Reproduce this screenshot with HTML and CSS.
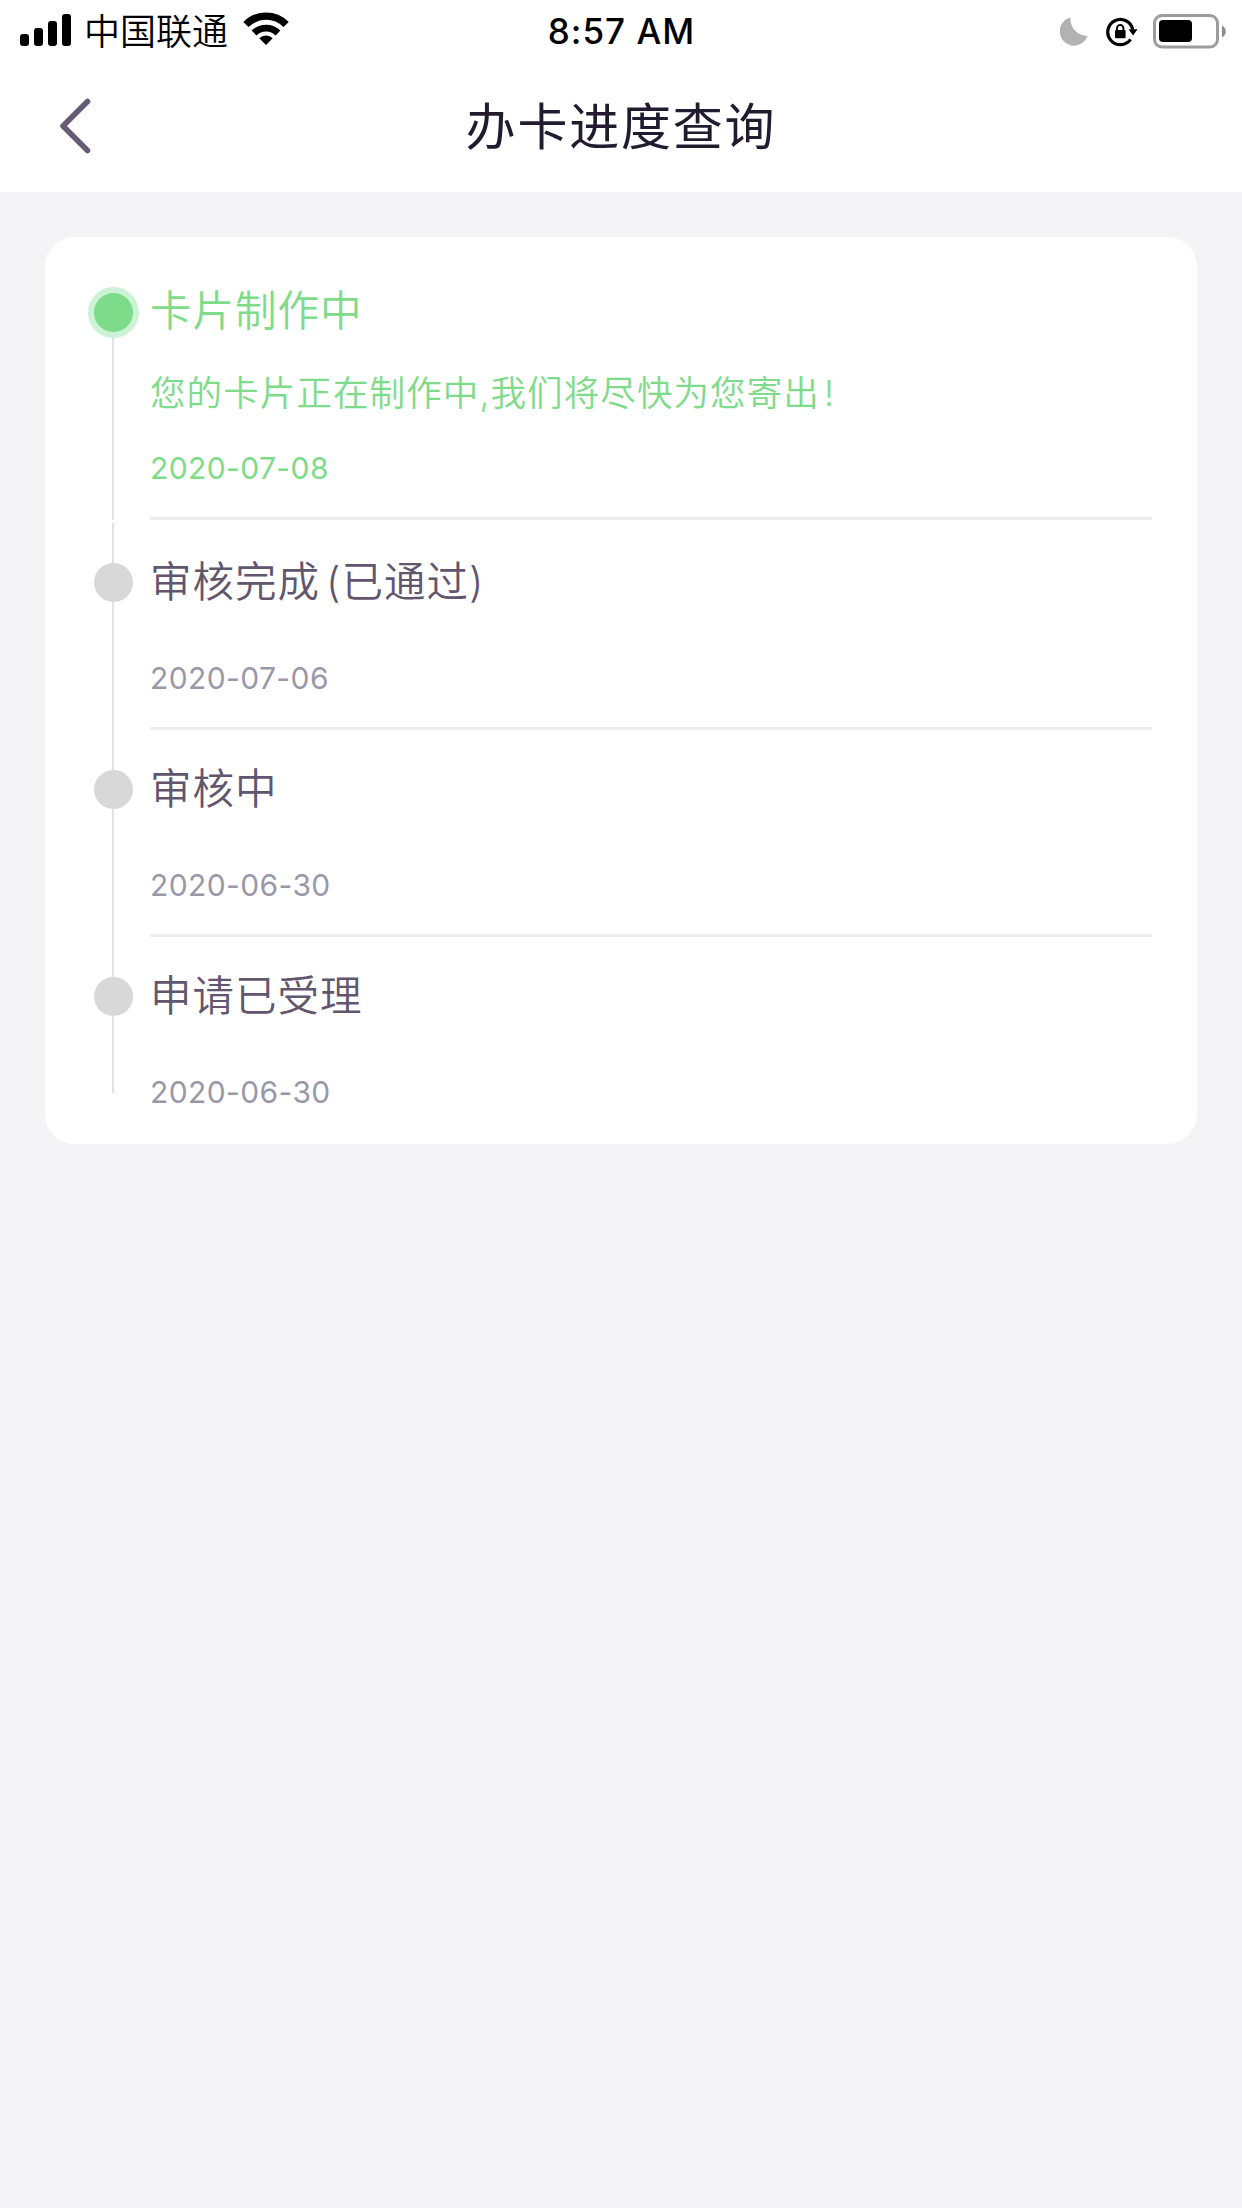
FILE: index.html
```html
<!DOCTYPE html>
<html lang="zh-CN">
<head>
    <meta charset="UTF-8">
    <meta name="viewport" content="width=device-width, initial-scale=1.0">
    <title>办卡进度查询</title>
    <link rel="stylesheet" href="styles.css">
</head>
<body>
    <div class="status-bar">
        <div class="status-left">
            <svg class="icon-signal" width="52" height="32" viewBox="0 0 52 32">
                <rect x="0" y="20" width="9" height="12" rx="3"/>
                <rect x="14" y="14" width="9" height="18" rx="3"/>
                <rect x="28" y="7" width="9" height="25" rx="3"/>
                <rect x="42" y="0" width="9" height="32" rx="3"/>
            </svg>
            <span class="carrier">中国联通</span>
            <svg class="icon-wifi" width="46" height="34" viewBox="0 0 46 34">
                <path d="M2.9 12.5A28.4 28.4 0 0 1 43.1 12.5" fill="none" stroke="#000" stroke-width="7.4"/>
                <path d="M11 21A17 17 0 0 1 35 21" fill="none" stroke="#000" stroke-width="6.8"/>
                <path d="M23 33L16.3 26.3A9.5 9.5 0 0 1 29.7 26.3Z"/>
            </svg>
        </div>
        <div class="clock">8:57 AM</div>
        <div class="status-right">
            <svg class="icon-moon" width="28" height="29" viewBox="0 0 28 29">
                <path d="M10.5 0.5A17 17 0 0 0 27.5 19A14.3 14.3 0 1 1 10.5 0.5Z" fill="#b2b2b2"/>
            </svg>
            <svg class="icon-lock" width="32" height="30" viewBox="0 0 32 30">
                <path d="M24.6 22.4A12.6 12.6 0 1 1 26.7 12.5" fill="none" stroke="#000" stroke-width="3.2"/>
                <path d="M22.6 12.2H31.6L27 18.4Z"/>
                <rect x="9" y="13" width="10.6" height="8.2" rx="1"/>
                <path d="M11 14V11.2A3.2 3.2 0 0 1 17.4 11.2V14" fill="none" stroke="#000" stroke-width="1.9"/>
            </svg>
            <svg class="icon-battery" width="74" height="35" viewBox="0 0 74 35">
                <rect x="1.5" y="1.5" width="63" height="31.5" rx="7.5" fill="none" stroke="#9c9c9c" stroke-width="3"/>
                <rect x="6" y="6" width="33" height="22" rx="4"/>
                <path d="M69 11.5C74 14 74 21 69 23.5Z" fill="#8c8c8c"/>
            </svg>
        </div>
    </div>

    <header class="nav">
        <svg class="back" width="32" height="56" viewBox="0 0 32 56">
            <path d="M27.5 3.5L3 28L27.5 52.5" fill="none" stroke="#665b74" stroke-width="5.6" stroke-linecap="round" stroke-linejoin="round"/>
        </svg>
        <h1>办卡进度查询</h1>
    </header>

    <ul class="card">
        <li class="step active">
            <div class="axis">
                <span class="line top"></span>
                <span class="dot"></span>
                <span class="line"></span>
            </div>
            <div class="content">
                <h2>卡片制作中</h2>
                <p class="desc">您的卡片正在制作中,我们将尽快为您寄出<span class="mark">!</span></p>
                <time>2020-07-08</time>
            </div>
        </li>
        <li class="step second">
            <div class="axis">
                <span class="line top"></span>
                <span class="dot"></span>
                <span class="line"></span>
            </div>
            <div class="content">
                <h2>审核完成<span class="paren">(</span>已通过)</h2>
                <time>2020-07-06</time>
            </div>
        </li>
        <li class="step">
            <div class="axis">
                <span class="line top"></span>
                <span class="dot"></span>
                <span class="line"></span>
            </div>
            <div class="content">
                <h2>审核中</h2>
                <time>2020-06-30</time>
            </div>
        </li>
        <li class="step last">
            <div class="axis">
                <span class="line top"></span>
                <span class="dot"></span>
                <span class="line"></span>
            </div>
            <div class="content">
                <h2>申请已受理</h2>
                <time>2020-06-30</time>
            </div>
        </li>
    </ul>
</body>
</html>
```

FILE: styles.css
```css
:root {
    --green: #7ddb8a;
    --purple: #62566f;
    --title: #221a2e;
    --date: #9a98a8;
    --line: #e2e2e2;
    --bg: #f4f4f6;
}

* {
    box-sizing: border-box;
    margin: 0;
    padding: 0;
}

body {
    font-family: Inter, "Noto Sans CJK SC", sans-serif;
    font-weight: 350;
    background-color: var(--bg);
    min-height: 2208px;
}

svg {
    display: block;
    flex-shrink: 0;
}

/* status bar */
.status-bar {
    display: grid;
    grid-template-columns: 1fr auto 1fr;
    height: 60px;
    padding: 0 15px 0 20px;
    background-color: #fff;
    color: #000;
}

.status-left,
.status-right {
    display: flex;
    align-items: flex-start;
}

.status-right {
    justify-content: flex-end;
}

.icon-signal {
    margin-top: 14px;
}

.carrier {
    margin: 4px 0 0 12px;
    font-size: 36px;
    line-height: 56px;
    white-space: nowrap;
}

.icon-wifi {
    margin: 12px 0 0 15px;
}

.clock {
    margin-right: 4px;
    font-size: 35px;
    font-weight: 500;
    line-height: 63px;
    letter-spacing: 1px;
}

.icon-moon {
    margin-top: 17px;
}

.icon-lock {
    margin: 17px 0 0 18px;
}

.icon-battery {
    margin: 14px 0 0 15px;
}

/* nav */
.nav {
    display: grid;
    grid-template-columns: 1fr auto 1fr;
    height: 132px;
    padding: 0 60px;
    background-color: #fff;
}

.back {
    margin-top: 38px;
}

.nav h1 {
    padding-top: 1px;
    font-size: 50px;
    font-weight: 400;
    line-height: 132px;
    letter-spacing: 1.8px;
    color: var(--title);
}

/* progress card */
.card {
    margin: 45px;
    border-radius: 30px;
    background-color: #fff;
    list-style: none;
}

.step {
    display: flex;
    height: 207px;
    padding: 0 45px 0 43px;
}

.axis {
    display: flex;
    flex-direction: column;
    align-items: center;
    width: 51px;
    margin-right: 11px;
}

.line {
    flex: 1;
    width: 2px;
    margin-right: 1px;
    background-color: var(--line);
}

.line.top {
    flex: 0 0 40px;
}

.dot {
    width: 39px;
    height: 39px;
    border-radius: 50%;
    background-color: #d8d8d8;
}

.content {
    flex: 1;
    border-bottom: 3px solid #ececec;
}

.content h2 {
    padding-top: 29px;
    font-size: 41.5px;
    font-weight: 350;
    line-height: 60px;
    letter-spacing: 1px;
    color: var(--purple);
}

.content time {
    display: block;
    margin-top: 45px;
    font-size: 30px;
    font-weight: 400;
    line-height: 42px;
    letter-spacing: 0.4px;
    color: var(--date);
}

.paren {
    margin-left: 6px;
}

.active {
    height: 283px;
}

.active .line.top {
    flex-basis: 50px;
    background: none;
}

.active .dot {
    width: 51px;
    height: 51px;
    border: 6px solid #cdf3d6;
    background-color: var(--green);
}

.active h2 {
    padding-top: 44px;
}

.active h2,
.active .desc,
.active time {
    color: var(--green);
}

.active .desc {
    margin-top: 25px;
    font-size: 35.5px;
    line-height: 56px;
    letter-spacing: 1.1px;
}

.active time {
    margin-top: 25px;
}

.mark {
    margin-left: 4px;
}

.second {
    height: 210px;
}

.second .axis {
    padding-top: 3px;
}

.second h2 {
    padding-top: 32px;
}

.last .axis {
    padding-bottom: 51px;
}

.last .content {
    border-bottom: none;
}
```
